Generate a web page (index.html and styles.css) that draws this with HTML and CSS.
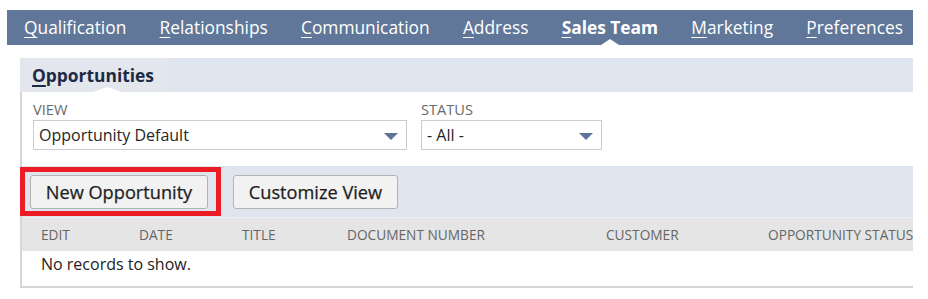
FILE: index.html
```html
<!DOCTYPE html>
<html>
<head>
<meta charset="utf-8">
<link rel="stylesheet" href="styles.css">
</head>
<body>
<div class="page">
  <nav class="tabs">
    <span class="tab"><u>Q</u>ualification</span>
    <span class="tab"><u>R</u>elationships</span>
    <span class="tab"><u>C</u>ommunication</span>
    <span class="tab"><u>A</u>ddress</span>
    <span class="tab active"><u>S</u>ales Team</span>
    <span class="tab"><u>M</u>arketing</span>
    <span class="tab"><u>P</u>references</span>
  </nav>
  <section class="sub">
    <div class="subtabs">
      <span class="subtab"><u>O</u>pportunities</span>
    </div>
    <div class="panel">
      <div class="filters">
        <div class="field">
          <label class="lbl">VIEW</label>
          <div class="select wide"><span>Opportunity Default</span><i class="arrow"></i></div>
        </div>
        <div class="field">
          <label class="lbl">STATUS</label>
          <div class="select narrow"><span>- All -</span><i class="arrow"></i></div>
        </div>
      </div>
      <div class="btnbar">
        <button class="btn first">New Opportunity</button>
        <button class="btn second">Customize View</button>
        <div class="redbox"></div>
      </div>
      <div class="thead">
        <span>EDIT</span><span>DATE</span><span>TITLE</span><span>DOCUMENT NUMBER</span><span>CUSTOMER</span><span>OPPORTUNITY STATUS</span>
      </div>
      <div class="row">No records to show.</div>
    </div>
  </section>
</div>
</body>
</html>
```
FILE: styles.css
```css
* { box-sizing: border-box; }
html, body { margin: 0; background: #fff; }
body { font-family: "Open Sans", "Liberation Sans", sans-serif; color: #262626; }
.page { padding: 10px 0 0 7px; width: 928px; }
.tabs {
  width: 906px; height: 35px; background: #607799;
  display: flex; align-items: center; gap: 33.2px; padding-left: 17px;
  white-space: nowrap; overflow: hidden;
}
.tab { color: #fff; font-size: 17.35px; line-height: 35px; position: relative; }
.tab u { text-decoration-thickness: 1px; text-underline-offset: 3px; }
.tab.active { font-weight: 700; }
.tab.active::after {
  content: ""; position: absolute; left: 50%; bottom: 0; margin-left: -9px;
  border-left: 9px solid transparent; border-right: 9px solid transparent;
  border-bottom: 6px solid #fff;
}
.sub { margin: 13px 0 0 13px; width: 893px; }
.subtabs { height: 34px; background: #dfe5ef; display: flex; }
.subtab {
  width: 148px; background: #e3e6ec; font-weight: 700; font-size: 17.4px; color: #1d2a45;
  line-height: 34px; padding-left: 12px; position: relative; white-space: nowrap;
}
.subtab u { text-decoration-thickness: 2px; text-underline-offset: 3px; }
.subtab::after {
  content: ""; position: absolute; left: 73px; bottom: 0;
  border-left: 14px solid transparent; border-right: 14px solid transparent;
  border-bottom: 5px solid #fff;
}
.panel { border-left: 2px solid #d6d6d6; border-bottom: 2px solid #d6d6d6; }
.filters { display: flex; gap: 14px; padding: 8px 0 16px 11px; }
.field { display: flex; flex-direction: column; gap: 1px; }
.lbl { font-size: 14.6px; line-height: 19px; color: #6a6a6a; }
.select {
  height: 30px; border: 1px solid #cccccc; display: flex; align-items: center;
  justify-content: space-between; padding: 0 8px 0 5px; font-size: 16px; color: #262626;
}
.select.wide { width: 374px; }
.select.narrow { width: 181px; }
.arrow {
  width: 0; height: 0; border-left: 7px solid transparent; border-right: 7px solid transparent;
  border-top: 7px solid #5e7399; margin-top: 2px;
}
.btnbar {
  height: 51px; background: #dfe5ef; display: flex; align-items: center; gap: 25px;
  padding-left: 8px; position: relative;
}
.btn {
  height: 34px; border: 1px solid #b3b3b3; border-radius: 3px; background: #f2f2f2;
  font-family: inherit; font-size: 18.2px; font-weight: 500; color: #1e1e1e; padding: 0;
  white-space: nowrap; -webkit-text-stroke: 0.25px #1e1e1e;
}
.btn.first { width: 178px; }
.btn.second { width: 165px; }
.redbox {
  position: absolute; left: -2px; top: 1px; width: 201px; height: 49px;
  border: 5px solid #ec1c24;
}
.thead {
  height: 34px; background: #e5e5e5; display: grid;
  grid-template-columns: 98px 103px 105px 259px 162px 160px;
  align-items: center; padding-left: 19px; font-size: 13.7px; color: #666;
  white-space: nowrap; overflow: hidden; border-top: 1px solid #edf0f5;
}
.row { height: 35px; line-height: 26px; padding-left: 19px; font-size: 16px; color: #222; }
```
